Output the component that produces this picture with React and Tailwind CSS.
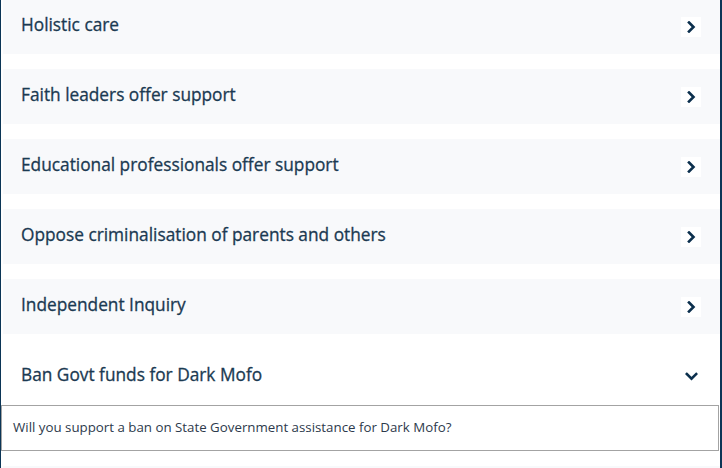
import React from "react";

const items = [
  "Holistic care",
  "Faith leaders offer support",
  "Educational professionals offer support",
  "Oppose criminalisation of parents and others",
  "Independent Inquiry",
];

function ChevronRight() {
  return (
    <span className="flex h-5 w-5 items-center justify-center bg-white">
      <svg width="9" height="12" viewBox="0 0 9 12" fill="none">
        <path d="M2 1.5 L6.5 6 L2 10.5" stroke="#0b2f4d" strokeWidth="2.6" strokeLinecap="square" strokeLinejoin="miter" />
      </svg>
    </span>
  );
}

function ChevronDown() {
  return (
    <span className="flex h-5 w-5 items-center justify-center bg-white">
      <svg width="13" height="9" viewBox="0 0 13 9" fill="none">
        <path d="M1.8 2 L6.5 6.6 L11.2 2" stroke="#0b2f4d" strokeWidth="2.6" strokeLinecap="square" strokeLinejoin="miter" />
      </svg>
    </span>
  );
}

export default function App() {
  return (
    <div
      className="h-[468px] w-[722px] overflow-hidden border-l border-r-2 border-[#0b3556] bg-white"
      style={{ fontFamily: "'Open Sans', Lato, sans-serif" }}
    >
      <div className="-mt-px flex flex-col gap-[15px] pl-[2px]">
        {items.map((t) => (
          <div key={t} className="flex h-[55px] items-center justify-between bg-[#f8f9fb] pb-[3px] pl-[18px] pr-[19px]">
            <span className="text-[17.3px] font-medium text-[#1b3a52] [-webkit-text-stroke:0.3px_#1b3a52]">{t}</span>
            <span className="pt-[3px]"><ChevronRight /></span>
          </div>
        ))}
        <div>
          <div className="flex h-[55px] items-center justify-between bg-white pb-[3px] pl-[18px] pr-[19px]">
            <span className="text-[17.3px] font-medium text-[#1b3a52] [-webkit-text-stroke:0.3px_#1b3a52]">Ban Govt funds for Dark Mofo</span>
            <span className="pt-[3px]"><ChevronDown /></span>
          </div>
          <div className="-ml-[2px] mr-px mt-px flex h-[46px] items-center border border-[#a3a3a3] bg-white pl-[11px]">
            <span className="text-[13.3px] text-[#2d3a4c]">
              Will you support a ban on State Government assistance for Dark Mofo?
            </span>
          </div>
          <div className="mt-[15px] h-[55px] bg-[#f8f9fb]"></div>
        </div>
      </div>
    </div>
  );
}
